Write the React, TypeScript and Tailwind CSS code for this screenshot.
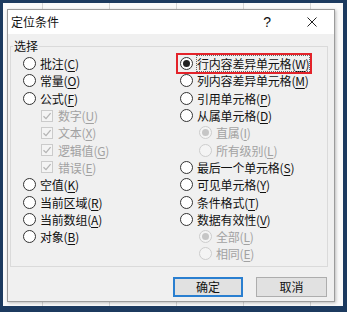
import clsx from "clsx";

type Item = {
  text: string;
  k: string;
  kind?: "radio" | "check";
  checked?: boolean;
  disabled?: boolean;
  sub?: boolean;
  mark?: boolean;
};

const leftItems: Item[] = [
  { text: "批注", k: "C" },
  { text: "常量", k: "O" },
  { text: "公式", k: "F" },
  { text: "数字", k: "U", kind: "check", checked: true, disabled: true, sub: true },
  { text: "文本", k: "X", kind: "check", checked: true, disabled: true, sub: true },
  { text: "逻辑值", k: "G", kind: "check", checked: true, disabled: true, sub: true },
  { text: "错误", k: "E", kind: "check", checked: true, disabled: true, sub: true },
  { text: "空值", k: "K" },
  { text: "当前区域", k: "R" },
  { text: "当前数组", k: "A" },
  { text: "对象", k: "B" },
];

const rightItems: Item[] = [
  { text: "行内容差异单元格", k: "W", checked: true, mark: true },
  { text: "列内容差异单元格", k: "M" },
  { text: "引用单元格", k: "P" },
  { text: "从属单元格", k: "D" },
  { text: "直属", k: "I", checked: true, disabled: true, sub: true },
  { text: "所有级别", k: "L", disabled: true, sub: true },
  { text: "最后一个单元格", k: "S" },
  { text: "可见单元格", k: "Y" },
  { text: "条件格式", k: "T" },
  { text: "数据有效性", k: "V" },
  { text: "全部", k: "L", checked: true, disabled: true, sub: true },
  { text: "相同", k: "E", disabled: true, sub: true },
];

function Radio({ checked, disabled }: { checked?: boolean; disabled?: boolean }) {
  return (
    <span
      className={clsx(
        "w-[13px] h-[13px] rounded-full border flex items-center justify-center shrink-0",
        disabled ? "border-[#cdcdcd] bg-[#f4f4f4]" : "border-[#333] bg-white"
      )}
    >
      {checked && (
        <span
          className={clsx(
            "w-[7px] h-[7px] rounded-full",
            disabled ? "bg-[#c6c6c6]" : "bg-[#222]"
          )}
        />
      )}
    </span>
  );
}

function Check({ checked }: { checked?: boolean }) {
  return (
    <span className="w-[12px] h-[12px] border border-[#cbcbcb] bg-[#f4f4f4] flex items-center justify-center shrink-0">
      {checked && (
        <svg width="10" height="10" viewBox="0 0 10 10">
          <path d="M1.5 5.2 L4 7.6 L8.6 2.2" fill="none" stroke="#b4b4b4" strokeWidth="1.3" />
        </svg>
      )}
    </span>
  );
}

function Row({ item }: { item: Item }) {
  const isCheck = item.kind === "check";
  return (
    <div
      className={clsx(
        "h-[17.3px] flex items-center",
        item.sub ? (isCheck ? "pl-[18px]" : "pl-[19px]") : ""
      )}
    >
      <span className="relative inline-flex items-center">
        {isCheck ? <Check checked={item.checked} /> : <Radio checked={item.checked} disabled={item.disabled} />}
        <span
          className={clsx(
            "whitespace-nowrap leading-[15px] tracking-[-0.2px]",
            isCheck ? "ml-[5px]" : "ml-[4px]",
            item.disabled ? "text-[#a2a2a2]" : "text-[#111]",
            item.mark && "outline outline-1 outline-dotted outline-[#666]"
          )}
        >
          {item.text}(<span className="underline underline-offset-2">{item.k}</span>)
        </span>
        {item.mark && (
          <span className="absolute left-[-4px] right-[-3px] top-[-3px] bottom-[-3px] border-2 border-[#e3232a] pointer-events-none" />
        )}
      </span>
    </div>
  );
}

export default function App() {
  return (
    <div className="w-[347px] h-[312px] bg-[#1c3a5f] pt-[3px] pl-[3px] pr-[4px] pb-[6px] font-['Microsoft_YaHei','Noto_Sans_CJK_SC',sans-serif] text-[12px]">
      <div className="h-full bg-[#fafafa] bg-[repeating-linear-gradient(90deg,transparent_0_39px,#d6d6d6_39px_40px,transparent_40px_67px)] pl-[4px] pt-[6px]">
        <div className="w-[328px] h-[293px] border border-[#9c9c9c] shadow-[1px_1px_3px_rgba(0,0,0,0.25)] bg-[#f0f0f0] flex flex-col">
          <div className="h-[24px] bg-white flex items-center pl-[3px] pr-[17px] text-[#111]">
            <span className="flex-1 text-[12px]">定位条件</span>
            <span className="font-['Liberation_Sans',sans-serif] text-[14px] mr-[36px]">?</span>
            <svg width="10" height="10" viewBox="0 0 10 10">
              <path d="M0.5 0.5 L9.5 9.5 M9.5 0.5 L0.5 9.5" stroke="#222" strokeWidth="1" />
            </svg>
          </div>
          <div className="flex-1 flex flex-col pt-[4px]">
            <fieldset className="ml-[2px] mr-[6px] h-[229px] border border-[#dadada] px-0 pb-[4px]">
              <legend className="ml-[2px] px-[1px] leading-[16px] text-[#111]">选择</legend>
              <div className="grid grid-cols-[157px_1fr] pl-[12px] pt-[1px]">
                <div className="flex flex-col">
                  {leftItems.map((it, i) => (
                    <Row key={i} item={it} />
                  ))}
                </div>
                <div className="flex flex-col">
                  {rightItems.map((it, i) => (
                    <Row key={i} item={it} />
                  ))}
                </div>
              </div>
            </fieldset>
            <div className="flex justify-end gap-[13px] pr-[7px] mt-[10px]">
              <button className="w-[70px] h-[20px] border-2 border-[#2a7fd0] bg-[#e1e1e1] text-[#111] leading-none">
                确定
              </button>
              <button className="w-[71px] h-[20px] border border-[#adadad] bg-[#e1e1e1] text-[#111] leading-none">
                取消
              </button>
            </div>
          </div>
        </div>
      </div>
    </div>
  );
}
